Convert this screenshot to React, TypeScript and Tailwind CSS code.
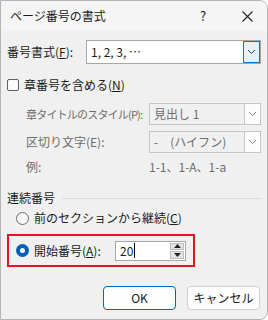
import React from 'react';

const font = { fontFamily: '"Noto Sans CJK JP", "Noto Sans", sans-serif' };

function Chevron({ color = '#333' }: { color?: string }) {
  return (
    <svg width="9" height="6" viewBox="0 0 9 6">
      <polyline points="1,1 4.5,4.5 8,1" fill="none" stroke={color} strokeWidth="1" />
    </svg>
  );
}

function DisabledSelect({ value }: { value: string }) {
  return (
    <div className="flex h-[22px] w-[112px] shrink-0 items-stretch border border-[#c6c6c6] bg-[#f0f0f0]">
      <div className="flex flex-1 items-center whitespace-nowrap pl-[4px] text-[12px] text-[#6d6d6d]">{value}</div>
      <div className="flex w-[16px] items-center justify-center border-l border-[#c6c6c6] bg-[#fcfcfc]">
        <Chevron color="#888" />
      </div>
    </div>
  );
}

export default function App() {
  return (
    <div
      className="flex h-[320px] w-[268px] flex-col overflow-hidden rounded-r-[8px] border border-[#b4b4b4] bg-[#f0f0f0] text-[#1b1b1b]"
      style={font}
    >
      {/* title bar */}
      <div className="flex h-[30px] shrink-0 items-center bg-[#f5f5f5] pl-[9px]">
        <span className="flex-1 text-[12px]">ページ番号の書式</span>
        <span className="w-[20px] text-center text-[13px]">?</span>
        <span className="ml-[24px] mr-[10px] flex w-[20px] justify-center">
          <svg width="11" height="11" viewBox="0 0 11 11">
            <path d="M0.5 0.5 L10.5 10.5 M10.5 0.5 L0.5 10.5" stroke="#222" strokeWidth="1.1" />
          </svg>
        </span>
      </div>

      <div className="flex flex-col pl-[6px] pr-[6px]">
        {/* number format */}
        <div className="mt-[9px] flex h-[24px] items-center">
          <span className="w-[79px] whitespace-nowrap text-[12px]">
            番号書式(<span className="underline">F</span>):
          </span>
          <div className="flex h-[24px] flex-1 items-stretch border border-[#a8a8a8] bg-white">
            <div className="flex flex-1 items-center pl-[4px] text-[12px]">1, 2, 3, …</div>
            <div className="flex w-[17px] items-center justify-center border border-[#0078d4] bg-[#e5f1fb]">
              <Chevron />
            </div>
          </div>
        </div>

        {/* chapter checkbox */}
        <div className="mt-[15px] flex h-[12px] items-center">
          <span className="h-[12px] w-[12px] rounded-[2px] border border-[#5f5f5f] bg-[#fbfbfb]" />
          <span className="ml-[5px] text-[12px]">
            章番号を含める(<span className="underline">N</span>)
          </span>
        </div>

        {/* chapter style */}
        <div className="mt-[12px] flex h-[22px] items-center pl-[19px] text-[12px] text-[#6d6d6d]">
          <span className="w-[123px] overflow-hidden whitespace-nowrap text-[11px] tracking-[-0.8px]">
            章タイトルのスタイル(P):
          </span>
          <DisabledSelect value="見出し 1" />
        </div>
        <div className="mt-[6px] flex h-[22px] items-center pl-[19px] text-[12px] text-[#6d6d6d]">
          <span className="w-[123px] whitespace-nowrap">区切り文字(E):</span>
          <DisabledSelect value="-　(ハイフン)" />
        </div>
        <div className="mt-[3px] flex h-[22px] items-center pl-[19px] text-[12px] text-[#6d6d6d]">
          <span className="w-[123px]">例:</span>
          <span>1-1、1-A、1-a</span>
        </div>

        {/* numbering group */}
        <div className="mt-[10px] flex h-[20px] items-center">
          <span className="text-[12px]">連続番号</span>
          <span className="ml-[7px] h-px flex-1 bg-[#d9d9d9]" />
        </div>
        <div className="mt-[3px] flex h-[14px] items-center pl-[9px]">
          <span className="h-[13px] w-[13px] rounded-full border border-[#6b6b6b] bg-[#f8f8f8]" />
          <span className="ml-[5px] text-[12px]">
            前のセクションから継続(<span className="underline">C</span>)
          </span>
        </div>
        <div className="mt-[9px] flex h-[33px] w-[188px] items-center border-2 border-[#e81123] pl-[7px]">
          <span className="flex h-[13px] w-[13px] items-center justify-center rounded-full bg-[#005fb8]">
            <span className="h-[5px] w-[5px] rounded-full bg-white" />
          </span>
          <span className="ml-[5px] w-[81px] whitespace-nowrap text-[12px]">
            開始番号(<span className="underline">A</span>):
          </span>
          <div className="flex h-[20px] w-[71px] items-stretch border border-[#a8a8a8] bg-white">
            <div className="flex flex-1 items-center pl-[4px] text-[12px]">
              20<span className="ml-px h-[15px] w-px bg-black" />
            </div>
            <div className="flex w-[16px] flex-col gap-px p-px">
              <div className="flex flex-1 items-center justify-center border border-[#bcbcbc] bg-[#e5e5e5]">
                <svg width="7" height="4" viewBox="0 0 7 4">
                  <polygon points="3.5,0 7,4 0,4" fill="#222" />
                </svg>
              </div>
              <div className="flex flex-1 items-center justify-center border border-[#bcbcbc] bg-[#e5e5e5]">
                <svg width="7" height="4" viewBox="0 0 7 4">
                  <polygon points="0,0 7,0 3.5,4" fill="#222" />
                </svg>
              </div>
            </div>
          </div>
        </div>

        {/* buttons */}
        <div className="mt-[19px] flex justify-end gap-[11px] pr-[1px]">
          <button className="h-[24px] w-[73px] rounded-[4px] border border-[#0067c0] bg-[#fdfdfd] text-[12px]">
            OK
          </button>
          <button className="h-[24px] w-[73px] rounded-[4px] border border-[#d0d0d0] bg-[#fdfdfd] text-[12px]">
            キャンセル
          </button>
        </div>
      </div>
    </div>
  );
}
